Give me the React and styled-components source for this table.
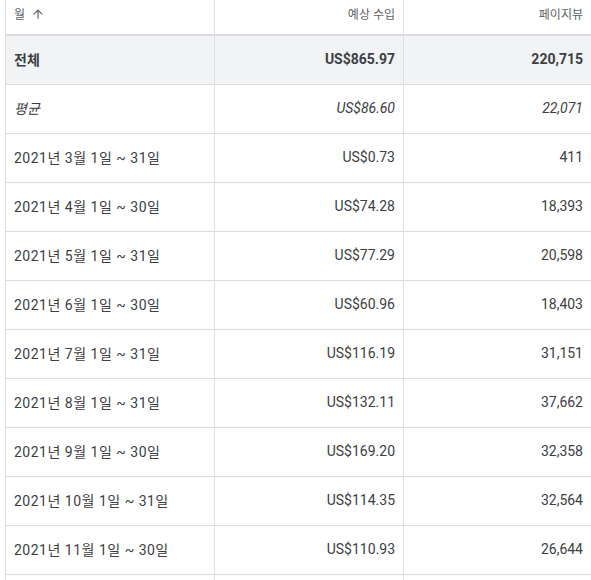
import React from "react";
import styled, { createGlobalStyle } from "styled-components";

const Global = createGlobalStyle`
  html, body { margin: 0; padding: 0; background: #fff; }
  body { font-family: Roboto, "Noto Sans CJK KR", Arial, sans-serif; color: #3c4043; overflow: hidden; }
  *, *::before, *::after { box-sizing: border-box; }
`;

const Wrap = styled.div`
  padding-left: 5px;
  width: 591px;
`;

const Table = styled.div`
  border-left: 1px solid #e0e0e0;
  display: flex;
  flex-direction: column;
`;

const Row = styled.div`
  display: grid;
  grid-template-columns: 209px 189px 1fr;
  flex: none;
  height: ${(p) => p.$h}px;
  background: ${(p) => (p.$total ? "#f1f3f4" : "#fff")};
  border-bottom: ${(p) => (p.$head ? "2px solid #dadce0" : "1px solid #dadce0")};
`;

const Cell = styled.div`
  display: flex;
  align-items: center;
  justify-content: ${(p) => (p.$right ? "flex-end" : "flex-start")};
  padding: 0 8px ${(p) => (p.$head ? "7px" : "2px")} 8px;
  border-right: ${(p) => (p.$last ? "none" : "1px solid #e0e0e0")};
  font-size: ${(p) => (p.$head ? "12px" : "14px")};
  color: ${(p) => (p.$head ? "#5f6368" : "#3c4043")};
  font-weight: ${(p) => (p.$total ? 700 : 400)};
  font-style: ${(p) => (p.$italic ? "italic" : "normal")};
  white-space: nowrap;
  overflow: hidden;
`;

const Ko = styled.span`
  letter-spacing: 0.5px;
`;

const SortIcon = styled.svg`
  width: 14px;
  height: 14px;
  margin-left: 6px;
  fill: #5f6368;
`;

const rows = [
  ["2021년 3월 1일 ~ 31일", "US$0.73", "411"],
  ["2021년 4월 1일 ~ 30일", "US$74.28", "18,393"],
  ["2021년 5월 1일 ~ 31일", "US$77.29", "20,598"],
  ["2021년 6월 1일 ~ 30일", "US$60.96", "18,403"],
  ["2021년 7월 1일 ~ 31일", "US$116.19", "31,151"],
  ["2021년 8월 1일 ~ 31일", "US$132.11", "37,662"],
  ["2021년 9월 1일 ~ 30일", "US$169.20", "32,358"],
  ["2021년 10월 1일 ~ 31일", "US$114.35", "32,564"],
  ["2021년 11월 1일 ~ 30일", "US$110.93", "26,644"],
  ["", "", ""],
];

export default function App() {
  return (
    <>
      <Global />
      <Wrap>
        <Table>
          <Row $head $h={36}>
            <Cell $head>
              월
              <SortIcon viewBox="0 0 24 24">
                <path d="M4 12l1.41 1.41L11 7.83V20h2V7.83l5.58 5.59L20 12l-8-8-8 8z" />
              </SortIcon>
            </Cell>
            <Cell $head $right>예상 수입</Cell>
            <Cell $head $right $last>페이지뷰</Cell>
          </Row>
          <Row $total $h={49}>
            <Cell $total>전체</Cell>
            <Cell $total $right>US$865.97</Cell>
            <Cell $total $right $last>220,715</Cell>
          </Row>
          <Row $h={49}>
            <Cell $italic>평균</Cell>
            <Cell $italic $right>US$86.60</Cell>
            <Cell $italic $right $last>22,071</Cell>
          </Row>
          {rows.map((r, i) => (
            <Row key={i} $h={49}>
              <Cell><Ko>{r[0]}</Ko></Cell>
              <Cell $right>{r[1]}</Cell>
              <Cell $right $last>{r[2]}</Cell>
            </Row>
          ))}
        </Table>
      </Wrap>
    </>
  );
}
